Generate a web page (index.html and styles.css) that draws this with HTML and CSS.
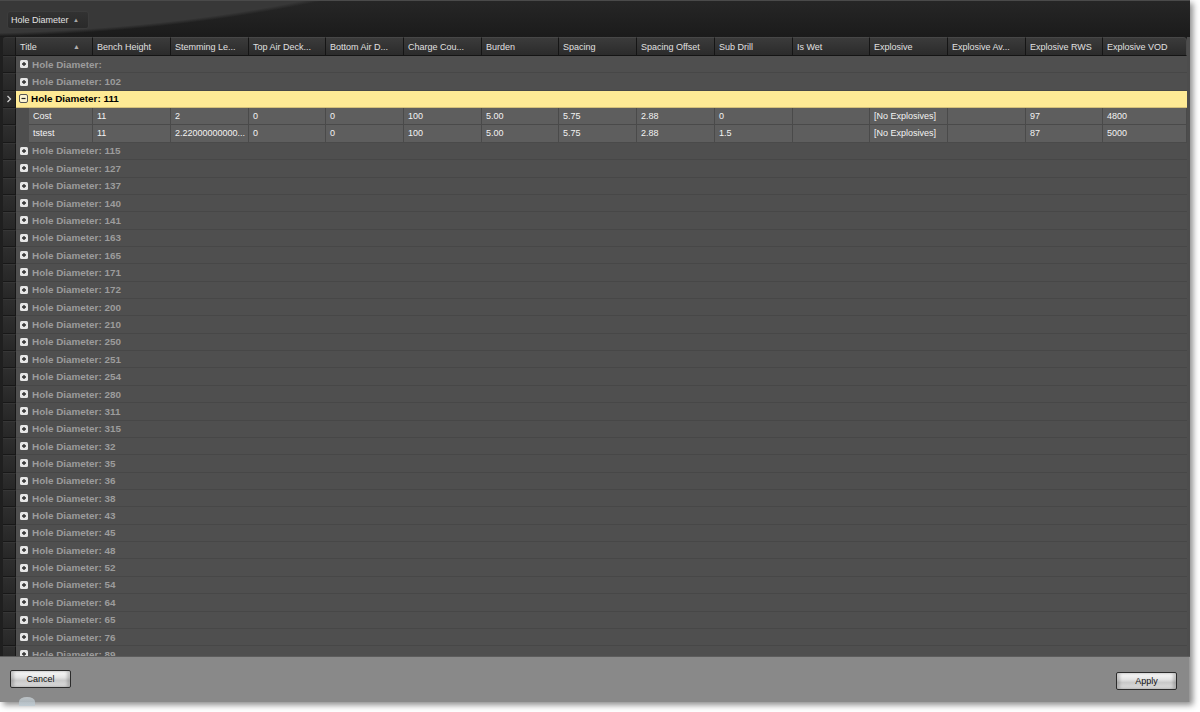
FILE: index.html
```html
<!DOCTYPE html>
<html>
<head>
<meta charset="utf-8">
<link rel="stylesheet" href="styles.css">
</head>
<body>
<div class="window">
  <div class="toolbar">
    <div class="group-btn">Hole Diameter <span class="tri">&#9650;</span></div>
  </div>
  <div class="grid">
    <div class="row header">
      <div class="hcell ind"></div>
      <div class="hcell title-h">Title <span class="tri">&#9650;</span></div>
      <div class="hcell">Bench Height</div>
      <div class="hcell">Stemming Le...</div>
      <div class="hcell">Top Air Deck...</div>
      <div class="hcell">Bottom Air D...</div>
      <div class="hcell">Charge Cou...</div>
      <div class="hcell">Burden</div>
      <div class="hcell">Spacing</div>
      <div class="hcell">Spacing Offset</div>
      <div class="hcell">Sub Drill</div>
      <div class="hcell">Is Wet</div>
      <div class="hcell">Explosive</div>
      <div class="hcell">Explosive Av...</div>
      <div class="hcell">Explosive RWS</div>
      <div class="hcell last">Explosive VOD</div>
    </div>
    <div class="body">
      <div class="row"><div class="ind"></div><div class="grp"><svg class="ico" viewBox="0 0 8 8"><rect x="0" y="0" width="8" height="8" rx="1.5" fill="#e6e6e6"/><path d="M2 4h4M4 2v4" stroke="#2a2a2a" stroke-width="1.3"/></svg>Hole Diameter:</div></div>
      <div class="row"><div class="ind"></div><div class="grp"><svg class="ico" viewBox="0 0 8 8"><rect x="0" y="0" width="8" height="8" rx="1.5" fill="#e6e6e6"/><path d="M2 4h4M4 2v4" stroke="#2a2a2a" stroke-width="1.3"/></svg>Hole Diameter: 102</div></div>
      <div class="row"><div class="ind cur"><svg viewBox="0 0 6 8" class="chev"><path d="M1.5 1l3 3-3 3" fill="none" stroke="#d0d0d0" stroke-width="1.3"/></svg></div><div class="grp sel"><svg class="ico" viewBox="0 0 9 9"><rect x="0.5" y="0.5" width="8" height="8" rx="1.5" fill="#fbf3d0" stroke="#555"/><path d="M2.5 4.5h4" stroke="#222" stroke-width="1.2"/></svg>Hole Diameter: 111</div></div>
      <div class="row"><div class="ind"></div><div class="dc first">Cost</div><div class="dc">11</div><div class="dc">2</div><div class="dc">0</div><div class="dc">0</div><div class="dc">100</div><div class="dc">5.00</div><div class="dc">5.75</div><div class="dc">2.88</div><div class="dc">0</div><div class="dc"></div><div class="dc">[No Explosives]</div><div class="dc"></div><div class="dc">97</div><div class="dc">4800</div></div>
      <div class="row"><div class="ind"></div><div class="dc first">tstest</div><div class="dc">11</div><div class="dc">2.22000000000...</div><div class="dc">0</div><div class="dc">0</div><div class="dc">100</div><div class="dc">5.00</div><div class="dc">5.75</div><div class="dc">2.88</div><div class="dc">1.5</div><div class="dc"></div><div class="dc">[No Explosives]</div><div class="dc"></div><div class="dc">87</div><div class="dc">5000</div></div>
      <div class="row"><div class="ind"></div><div class="grp"><svg class="ico" viewBox="0 0 8 8"><rect width="8" height="8" rx="1.5" fill="#e6e6e6"/><path d="M2 4h4M4 2v4" stroke="#2a2a2a" stroke-width="1.3"/></svg>Hole Diameter: 115</div></div>
      <div class="row"><div class="ind"></div><div class="grp"><svg class="ico" viewBox="0 0 8 8"><rect width="8" height="8" rx="1.5" fill="#e6e6e6"/><path d="M2 4h4M4 2v4" stroke="#2a2a2a" stroke-width="1.3"/></svg>Hole Diameter: 127</div></div>
      <div class="row"><div class="ind"></div><div class="grp"><svg class="ico" viewBox="0 0 8 8"><rect width="8" height="8" rx="1.5" fill="#e6e6e6"/><path d="M2 4h4M4 2v4" stroke="#2a2a2a" stroke-width="1.3"/></svg>Hole Diameter: 137</div></div>
      <div class="row"><div class="ind"></div><div class="grp"><svg class="ico" viewBox="0 0 8 8"><rect width="8" height="8" rx="1.5" fill="#e6e6e6"/><path d="M2 4h4M4 2v4" stroke="#2a2a2a" stroke-width="1.3"/></svg>Hole Diameter: 140</div></div>
      <div class="row"><div class="ind"></div><div class="grp"><svg class="ico" viewBox="0 0 8 8"><rect width="8" height="8" rx="1.5" fill="#e6e6e6"/><path d="M2 4h4M4 2v4" stroke="#2a2a2a" stroke-width="1.3"/></svg>Hole Diameter: 141</div></div>
      <div class="row"><div class="ind"></div><div class="grp"><svg class="ico" viewBox="0 0 8 8"><rect width="8" height="8" rx="1.5" fill="#e6e6e6"/><path d="M2 4h4M4 2v4" stroke="#2a2a2a" stroke-width="1.3"/></svg>Hole Diameter: 163</div></div>
      <div class="row"><div class="ind"></div><div class="grp"><svg class="ico" viewBox="0 0 8 8"><rect width="8" height="8" rx="1.5" fill="#e6e6e6"/><path d="M2 4h4M4 2v4" stroke="#2a2a2a" stroke-width="1.3"/></svg>Hole Diameter: 165</div></div>
      <div class="row"><div class="ind"></div><div class="grp"><svg class="ico" viewBox="0 0 8 8"><rect width="8" height="8" rx="1.5" fill="#e6e6e6"/><path d="M2 4h4M4 2v4" stroke="#2a2a2a" stroke-width="1.3"/></svg>Hole Diameter: 171</div></div>
      <div class="row"><div class="ind"></div><div class="grp"><svg class="ico" viewBox="0 0 8 8"><rect width="8" height="8" rx="1.5" fill="#e6e6e6"/><path d="M2 4h4M4 2v4" stroke="#2a2a2a" stroke-width="1.3"/></svg>Hole Diameter: 172</div></div>
      <div class="row"><div class="ind"></div><div class="grp"><svg class="ico" viewBox="0 0 8 8"><rect width="8" height="8" rx="1.5" fill="#e6e6e6"/><path d="M2 4h4M4 2v4" stroke="#2a2a2a" stroke-width="1.3"/></svg>Hole Diameter: 200</div></div>
      <div class="row"><div class="ind"></div><div class="grp"><svg class="ico" viewBox="0 0 8 8"><rect width="8" height="8" rx="1.5" fill="#e6e6e6"/><path d="M2 4h4M4 2v4" stroke="#2a2a2a" stroke-width="1.3"/></svg>Hole Diameter: 210</div></div>
      <div class="row"><div class="ind"></div><div class="grp"><svg class="ico" viewBox="0 0 8 8"><rect width="8" height="8" rx="1.5" fill="#e6e6e6"/><path d="M2 4h4M4 2v4" stroke="#2a2a2a" stroke-width="1.3"/></svg>Hole Diameter: 250</div></div>
      <div class="row"><div class="ind"></div><div class="grp"><svg class="ico" viewBox="0 0 8 8"><rect width="8" height="8" rx="1.5" fill="#e6e6e6"/><path d="M2 4h4M4 2v4" stroke="#2a2a2a" stroke-width="1.3"/></svg>Hole Diameter: 251</div></div>
      <div class="row"><div class="ind"></div><div class="grp"><svg class="ico" viewBox="0 0 8 8"><rect width="8" height="8" rx="1.5" fill="#e6e6e6"/><path d="M2 4h4M4 2v4" stroke="#2a2a2a" stroke-width="1.3"/></svg>Hole Diameter: 254</div></div>
      <div class="row"><div class="ind"></div><div class="grp"><svg class="ico" viewBox="0 0 8 8"><rect width="8" height="8" rx="1.5" fill="#e6e6e6"/><path d="M2 4h4M4 2v4" stroke="#2a2a2a" stroke-width="1.3"/></svg>Hole Diameter: 280</div></div>
      <div class="row"><div class="ind"></div><div class="grp"><svg class="ico" viewBox="0 0 8 8"><rect width="8" height="8" rx="1.5" fill="#e6e6e6"/><path d="M2 4h4M4 2v4" stroke="#2a2a2a" stroke-width="1.3"/></svg>Hole Diameter: 311</div></div>
      <div class="row"><div class="ind"></div><div class="grp"><svg class="ico" viewBox="0 0 8 8"><rect width="8" height="8" rx="1.5" fill="#e6e6e6"/><path d="M2 4h4M4 2v4" stroke="#2a2a2a" stroke-width="1.3"/></svg>Hole Diameter: 315</div></div>
      <div class="row"><div class="ind"></div><div class="grp"><svg class="ico" viewBox="0 0 8 8"><rect width="8" height="8" rx="1.5" fill="#e6e6e6"/><path d="M2 4h4M4 2v4" stroke="#2a2a2a" stroke-width="1.3"/></svg>Hole Diameter: 32</div></div>
      <div class="row"><div class="ind"></div><div class="grp"><svg class="ico" viewBox="0 0 8 8"><rect width="8" height="8" rx="1.5" fill="#e6e6e6"/><path d="M2 4h4M4 2v4" stroke="#2a2a2a" stroke-width="1.3"/></svg>Hole Diameter: 35</div></div>
      <div class="row"><div class="ind"></div><div class="grp"><svg class="ico" viewBox="0 0 8 8"><rect width="8" height="8" rx="1.5" fill="#e6e6e6"/><path d="M2 4h4M4 2v4" stroke="#2a2a2a" stroke-width="1.3"/></svg>Hole Diameter: 36</div></div>
      <div class="row"><div class="ind"></div><div class="grp"><svg class="ico" viewBox="0 0 8 8"><rect width="8" height="8" rx="1.5" fill="#e6e6e6"/><path d="M2 4h4M4 2v4" stroke="#2a2a2a" stroke-width="1.3"/></svg>Hole Diameter: 38</div></div>
      <div class="row"><div class="ind"></div><div class="grp"><svg class="ico" viewBox="0 0 8 8"><rect width="8" height="8" rx="1.5" fill="#e6e6e6"/><path d="M2 4h4M4 2v4" stroke="#2a2a2a" stroke-width="1.3"/></svg>Hole Diameter: 43</div></div>
      <div class="row"><div class="ind"></div><div class="grp"><svg class="ico" viewBox="0 0 8 8"><rect width="8" height="8" rx="1.5" fill="#e6e6e6"/><path d="M2 4h4M4 2v4" stroke="#2a2a2a" stroke-width="1.3"/></svg>Hole Diameter: 45</div></div>
      <div class="row"><div class="ind"></div><div class="grp"><svg class="ico" viewBox="0 0 8 8"><rect width="8" height="8" rx="1.5" fill="#e6e6e6"/><path d="M2 4h4M4 2v4" stroke="#2a2a2a" stroke-width="1.3"/></svg>Hole Diameter: 48</div></div>
      <div class="row"><div class="ind"></div><div class="grp"><svg class="ico" viewBox="0 0 8 8"><rect width="8" height="8" rx="1.5" fill="#e6e6e6"/><path d="M2 4h4M4 2v4" stroke="#2a2a2a" stroke-width="1.3"/></svg>Hole Diameter: 52</div></div>
      <div class="row"><div class="ind"></div><div class="grp"><svg class="ico" viewBox="0 0 8 8"><rect width="8" height="8" rx="1.5" fill="#e6e6e6"/><path d="M2 4h4M4 2v4" stroke="#2a2a2a" stroke-width="1.3"/></svg>Hole Diameter: 54</div></div>
      <div class="row"><div class="ind"></div><div class="grp"><svg class="ico" viewBox="0 0 8 8"><rect width="8" height="8" rx="1.5" fill="#e6e6e6"/><path d="M2 4h4M4 2v4" stroke="#2a2a2a" stroke-width="1.3"/></svg>Hole Diameter: 64</div></div>
      <div class="row"><div class="ind"></div><div class="grp"><svg class="ico" viewBox="0 0 8 8"><rect width="8" height="8" rx="1.5" fill="#e6e6e6"/><path d="M2 4h4M4 2v4" stroke="#2a2a2a" stroke-width="1.3"/></svg>Hole Diameter: 65</div></div>
      <div class="row"><div class="ind"></div><div class="grp"><svg class="ico" viewBox="0 0 8 8"><rect width="8" height="8" rx="1.5" fill="#e6e6e6"/><path d="M2 4h4M4 2v4" stroke="#2a2a2a" stroke-width="1.3"/></svg>Hole Diameter: 76</div></div>
      <div class="row"><div class="ind"></div><div class="grp"><svg class="ico" viewBox="0 0 8 8"><rect width="8" height="8" rx="1.5" fill="#e6e6e6"/><path d="M2 4h4M4 2v4" stroke="#2a2a2a" stroke-width="1.3"/></svg>Hole Diameter: 89</div></div>
    </div>
  </div>
  <div class="footer">
    <div class="btn">Cancel</div>
    <div class="btn apply">Apply</div>
    <span class="orb"></span>
  </div>
</div>
</body>
</html>
```
FILE: styles.css
```css
html, body {
  margin: 0;
  padding: 0;
  background: #ffffff;
}
body {
  font-family: "Liberation Sans", Arial, sans-serif;
  font-size: 9px;
  width: 1200px;
  height: 712px;
  overflow: hidden;
}
.window {
  position: relative;
  width: 1190px;
  height: 702px;
  display: flex;
  flex-direction: column;
  background: #1f1f1f;
  box-shadow: 3px 3px 6px rgba(0, 0, 0, 0.45);
}
.toolbar {
  height: 37px;
  box-sizing: border-box;
  padding: 10px 0 0 7px;
  border-top: 1px solid #4a4a4a;
  background:
    radial-gradient(ellipse 700px 236px at -50px -200px, #383838 98.5%, rgba(0,0,0,0) 100%),
    linear-gradient(#262626, #1b1b1b);
}
.group-btn {
  width: 82px;
  height: 18px;
  box-sizing: border-box;
  border: 1px solid #3c3c3c;
  border-radius: 3px;
  background: linear-gradient(#323232, #2a2a2a);
  color: #e2e2e2;
  line-height: 16px;
  padding-left: 3px;
  white-space: nowrap;
}
.tri {
  font-size: 6px;
  color: #a8a8a8;
  vertical-align: 1px;
  margin-left: 2px;
}
.grid {
  flex: 1;
  display: flex;
  flex-direction: column;
  padding: 0 3px 0 3px;
  background: #4d4d4d;
  overflow: hidden;
  box-shadow: inset 3px 0 0 #1f1f1f;
}
.row {
  display: grid;
  grid-template-columns: 13px 77px 78px 78px 77px 78px 78px 77px 78px 78px 78px 77px 78px 78px 77px 84px;
  height: 17.36px;
  flex: none;
}
.header {
  height: 19px;
  background: #1f1f1f;
}
.hcell {
  box-sizing: border-box;
  height: 19px;
  line-height: 18px;
  padding-left: 4px;
  color: #e0e0e0;
  background: linear-gradient(#3b3b3b, #2b2b2b);
  border-right: 1px solid #151515;
  border-bottom: 1px solid #141414;
  border-top: 1px solid #474747;
  white-space: nowrap;
  overflow: hidden;
}
.hcell.ind {
  background: linear-gradient(#2f2f2f, #262626);
  padding: 0;
  border-top-left-radius: 3px;
}
.hcell.last {
  border-top-right-radius: 4px;
  border-right: 1px solid #4a4a4a;
}
.title-h {
  display: flex;
  justify-content: space-between;
  padding-right: 12px;
}
.title-h .tri {
  font-size: 7px;
  vertical-align: 0;
  color: #b0b0b0;
}
.body {
  flex: 1;
  overflow: hidden;
  background: #4e4e4e;
}
.ind {
  box-sizing: border-box;
  background: linear-gradient(#2e2e2e, #272727);
  border-right: 1px solid #161616;
  border-bottom: 1px solid #181818;
  border-top: 1px solid #363636;
  display: flex;
  align-items: center;
  justify-content: center;
}
.chev {
  width: 6px;
  height: 8px;
}
.grp {
  grid-column: 2 / -1;
  box-sizing: border-box;
  display: flex;
  align-items: center;
  padding-left: 4px;
  font-weight: bold;
  font-size: 9.9px;
  color: #9c9c9c;
  background: #4f4f4f;
  border-bottom: 1px solid #474747;
  white-space: nowrap;
}
.grp.sel {
  background: #feea95;
  color: #000000;
  border-bottom: 1px solid #d4c07a;
}
.ico {
  width: 8px;
  height: 8px;
  margin-right: 4px;
  flex: none;
}
.grp.sel .ico {
  width: 9px;
  height: 9px;
  margin-right: 3px;
  margin-left: -1px;
}
.dc {
  box-sizing: border-box;
  background: #5e5e5e;
  color: #f3f3f3;
  border-right: 1px solid #4a4a4a;
  border-bottom: 1px solid #4a4a4a;
  padding-left: 4px;
  line-height: 16px;
  white-space: nowrap;
  overflow: hidden;
}
.dc.first {
  margin-left: 13px;
  padding-left: 4px;
}
.footer {
  height: 46px;
  box-sizing: border-box;
  background: #898989;
  border-top: 1px solid #5c5c5c;
  display: flex;
  justify-content: space-between;
  align-items: flex-start;
  padding: 13px 13px 0 10px;
  box-shadow: inset -1px 0 0 #9a9a9a;
}
.btn {
  width: 61px;
  height: 18px;
  box-sizing: border-box;
  border: 1px solid #2c2c2c;
  border-radius: 2px;
  background: linear-gradient(#fbfbfb, #e4e4e4 40%, #c9c9c9 60%, #dedede);
  box-shadow: inset 3px 0 3px rgba(0,0,0,0.18), inset -3px 0 3px rgba(0,0,0,0.18);
  color: #101010;
  text-align: center;
  line-height: 16px;
  font-size: 9px;
}
.btn.apply {
  margin-top: 2px;
}
.orb {
  position: absolute;
  left: 19px;
  bottom: -4px;
  width: 16px;
  height: 9px;
  border-radius: 50% 50% 0 0;
  background: linear-gradient(#dfe9ef, #b3c6d2);
  opacity: 0.6;
}
```
